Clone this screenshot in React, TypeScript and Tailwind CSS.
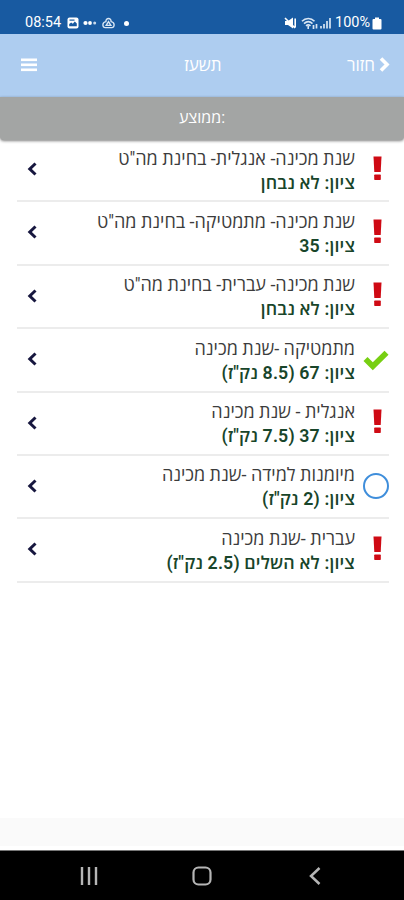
type Status = "fail" | "pass" | "open"

interface Course {
  name: string
  grade: string
  status: Status
}

const courses: Course[] = [
  { name: 'שנת מכינה- אנגלית- בחינת מה"ט', grade: "ציון: לא נבחן", status: "fail" },
  { name: 'שנת מכינה- מתמטיקה- בחינת מה"ט', grade: "ציון: 35", status: "fail" },
  { name: 'שנת מכינה- עברית- בחינת מה"ט', grade: "ציון: לא נבחן", status: "fail" },
  { name: "מתמטיקה -שנת מכינה", grade: 'ציון: 67 (8.5 נק"ז)', status: "pass" },
  { name: "אנגלית - שנת מכינה", grade: 'ציון: 37 (7.5 נק"ז)', status: "fail" },
  { name: "מיומנות למידה -שנת מכינה", grade: 'ציון: (2 נק"ז)', status: "open" },
  { name: "עברית -שנת מכינה", grade: 'ציון: לא השלים (2.5 נק"ז)', status: "fail" },
]

function StatusBar() {
  return (
    <div className="h-[34px] shrink-0 bg-[#185aa1] flex items-start justify-between pl-[25px] pr-[22px] pt-[13px] text-white">
      <div className="flex items-center h-5">
        <span className="text-[14.5px] leading-5 w-[37px]">08:54</span>
        <svg className="ml-[5px]" width="12" height="12" viewBox="0 0 12 12">
          <rect x="0.5" y="0.5" width="11" height="11" rx="2" fill="white" />
          <path d="M2.2 9.2V7l2-1.6 1.6 1.3 2-2.2 2 2v2.7z" fill="#185aa1" />
          <rect x="2.5" y="2.5" width="5" height="1.2" fill="#185aa1" />
        </svg>
        <svg className="ml-1" width="14" height="6" viewBox="0 0 14 6">
          <circle cx="2.5" cy="3" r="2.1" fill="white" />
          <circle cx="7" cy="3" r="1.9" fill="white" />
          <circle cx="11.7" cy="3" r="1.5" fill="#c9daec" />
        </svg>
        <svg className="ml-[5px]" width="13" height="12" viewBox="0 0 14 12" fill="none" stroke="#d9e6f4" strokeWidth="1.5">
          <path d="M4.2 4.5C4 0 10 0 9.8 4.5 14 5 14 11 10.5 11h-7C0 11 0 5 4.2 4.5z" />
          <path d="M4.5 8.5 7 4.5l2.5 4z" />
        </svg>
        <div className="ml-[9px] size-[5px] rounded-full bg-white" />
      </div>
      <div className="flex items-center h-5">
        <svg width="13" height="12" viewBox="0 0 13 12">
          <path d="M1 4h3l5-3.5v11L4 8H1z" fill="white" />
          <path d="M1 1l10 10M11.2 1.5v9" stroke="white" strokeWidth="1.6" />
        </svg>
        <svg className="ml-1" width="18" height="13" viewBox="0 0 18 13" fill="none" stroke="#d9e6f4" strokeWidth="1.6">
          <path d="M1 4.2C4.5.5 10 .5 13.5 4.2M3 6.6c2.6-2.4 6-2.4 8.5 0M5 8.8c1.5-1.3 3-1.3 4.5 0" />
          <path d="M7.2 9v3" />
          <path d="M12.5 8v4M15.5 7v4.5" strokeWidth="1.7" />
        </svg>
        <svg className="ml-px" width="12" height="12" viewBox="0 0 12 12" fill="#b9cfe6">
          <rect x="0" y="9" width="2" height="2.5" />
          <rect x="3" y="7" width="2" height="4.5" />
          <rect x="6" y="4" width="2" height="7.5" />
          <rect x="9" y="1" width="2" height="10.5" />
        </svg>
        <span className="ml-[3px] w-[37px] text-[14.5px] leading-5">100%</span>
        <svg width="10" height="13" viewBox="0 0 10 13" fill="white">
          <path d="M3 0.5h4V2h1.5Q9.5 2 9.5 3v8.5q0 1-1 1h-7q-1 0-1-1V3q0-1 1-1H3z" />
        </svg>
      </div>
    </div>
  )
}

function Header() {
  return (
    <header className="h-[63px] shrink-0 bg-[#aecdf0] grid grid-cols-3 items-center pl-[21px] pr-[14px] pb-[2px] text-white text-[17px] leading-6">
      <svg width="16" height="14" viewBox="0 0 16 14" fill="white">
        <rect x="0" y="0.5" width="16" height="2.6" />
        <rect x="0" y="5.5" width="16" height="2.6" />
        <rect x="0" y="10.5" width="16" height="2.6" />
      </svg>
      <span className="text-center pr-[5px]">תשעז</span>
      <div className="flex items-center justify-end">
        <span>חזור</span>
        <svg className="ml-1" width="11" height="15" viewBox="0 0 11 15" fill="none" stroke="white" strokeWidth="3.6">
          <path d="M2 1.5 8 7.5l-6 6" />
        </svg>
      </div>
    </header>
  )
}

function StatusIcon({ status }: { status: Status }) {
  if (status === "pass") {
    return (
      <svg className="mt-1" width="27" height="21" viewBox="0 0 27 21">
        <path d="M1.5 11 5.5 7l5.3 5.2L22.5.7l4 4L10.8 20.3z" fill="#77cf12" />
      </svg>
    )
  }
  if (status === "open") {
    return <div className="mt-[3px] size-[26px] rounded-full border-2 border-[#3f8edb]" />
  }
  return (
    <svg className="mr-[7px]" width="9" height="25" viewBox="0 0 9 25" fill="#cf0a14">
      <path d="M0.5 0.5h8l-.8 15.5H1.3z" />
      <rect x="1.2" y="18.5" width="6.6" height="5.5" rx="0.7" />
    </svg>
  )
}

function CourseRow({ course }: { course: Course }) {
  return (
    <li className="h-[63.4px] flex items-start border-b-2 border-[#ececec] pl-[10px]">
      <svg className="mt-[23px]" width="10" height="14" viewBox="0 0 10 14" fill="none" stroke="#17173f" strokeWidth="3">
        <path d="M8.5 1.5 2.8 7l5.7 5.5" />
      </svg>
      <div dir="rtl" className="flex-1 pt-[6.5px] whitespace-nowrap">
        <div className="text-[18px] leading-[25px] text-[#3c3c3c]">{course.name}</div>
        <div className="text-[17.75px] leading-[25px] font-semibold tracking-[0.15px] text-[#18452a]">{course.grade}</div>
      </div>
      <div className="w-[34px] h-[58px] flex items-center justify-end">
        <StatusIcon status={course.status} />
      </div>
    </li>
  )
}

function NavigationBar() {
  return (
    <nav className="h-[50px] shrink-0 bg-black border-t border-[#777] flex items-center justify-between pl-[80px] pr-[83px] text-[#b5b5b5]">
      <svg width="18" height="18" viewBox="0 0 18 18" stroke="currentColor" strokeWidth="2.4">
        <path d="M2 0v18M9 0v18M16 0v18" />
      </svg>
      <svg className="-ml-[3px]" width="20" height="20" viewBox="0 0 20 20" fill="none" stroke="currentColor" strokeWidth="2.2">
        <rect x="1.5" y="1.5" width="17" height="17" rx="5" />
      </svg>
      <svg width="12" height="18" viewBox="0 0 12 18" fill="none" stroke="currentColor" strokeWidth="2.5">
        <path d="M10.5 1 2 9l8.5 8" />
      </svg>
    </nav>
  )
}

export default function App() {
  return (
    <div className="w-[404px] h-[900px] flex flex-col overflow-hidden bg-white font-[Roboto,'Open_Sans','Noto_Sans',sans-serif]">
      <StatusBar />
      <Header />
      <div className="h-[43px] shrink-0 bg-[#a3a5a4] rounded-b-[4px] shadow-[0_1px_3px_rgba(0,0,0,0.5)] text-center text-white text-[16px] leading-[42px]">
        ממוצע:
      </div>
      <main className="flex-1 pl-[17px] pr-[15px]">
        <ul className="-mt-px">
          {courses.map((course) => (
            <CourseRow key={course.name} course={course} />
          ))}
        </ul>
      </main>
      <footer className="h-[28px] mb-1 shrink-0 bg-[#fafafa]" />
      <NavigationBar />
    </div>
  )
}
